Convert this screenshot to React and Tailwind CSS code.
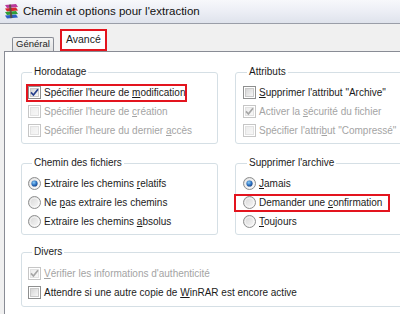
import React from 'react';

const ink = 'text-[#1b1b1b]';
const dim = 'text-[#a4a4a4]';

function WinRarIcon() {
  return (
    <svg width="17" height="17" viewBox="0 0 17 17" className="shrink-0">
      <path d="M2 2 L13 1 L15 4 L4 5 Z" fill="#b9399c" />
      <path d="M2 5.5 L13 4.5 L15 7.5 L4 8.5 Z" fill="#d8262f" />
      <path d="M2 9 L13 8 L15 11 L4 12 Z" fill="#2f9e3a" />
      <path d="M2 12.5 L13 11.5 L15 14.5 L4 15.5 Z" fill="#2d5fc4" />
      <path d="M6 1.8 L8 1.6 L9.4 15 L7.4 15.2 Z" fill="#5b4a3a" opacity="0.85" />
    </svg>
  );
}

function Box({ checked, disabled }) {
  const edge = disabled ? '#c6c6c6' : '#8e8f8f';
  const mark = disabled ? '#a6a6a6' : '#263f8c';
  return (
    <svg width="13" height="13" viewBox="0 0 13 13" className="shrink-0">
      <defs>
        <linearGradient id={disabled ? 'bxd' : 'bx'} x1="0" y1="0" x2="1" y2="1">
          <stop offset="0" stopColor={disabled ? '#ececec' : '#d3d3d3'} />
          <stop offset="1" stopColor={disabled ? '#f8f8f8' : '#f9f9f9'} />
        </linearGradient>
      </defs>
      <rect x="0.5" y="0.5" width="12" height="12" fill="#fff" stroke={edge} />
      <rect x="2.5" y="2.5" width="8" height="8" fill={`url(#${disabled ? 'bxd' : 'bx'})`} stroke={disabled ? '#e2e2e2' : '#c9c9c9'} />
      {checked && (
        <path d="M3 6.4 L5.4 9 L10 3.3" fill="none" stroke={mark} strokeWidth="1.7" />
      )}
    </svg>
  );
}

function Radio({ on }) {
  return (
    <svg width="13" height="13" viewBox="0 0 13 13" className="shrink-0">
      <defs>
        <linearGradient id="rd" x1="0" y1="0" x2="1" y2="1">
          <stop offset="0" stopColor="#d4d4d4" />
          <stop offset="1" stopColor="#fbfbfb" />
        </linearGradient>
        <radialGradient id="rdon" cx="0.4" cy="0.35" r="0.7">
          <stop offset="0" stopColor="#8fd0f8" />
          <stop offset="0.6" stopColor="#2a6fc0" />
          <stop offset="1" stopColor="#173f80" />
        </radialGradient>
      </defs>
      <circle cx="6.5" cy="6.5" r="6" fill="url(#rd)" stroke="#8e8f8f" />
      <circle cx="6.5" cy="6.5" r="4.4" fill="none" stroke="#ffffff" strokeOpacity="0.6" />
      {on && <circle cx="6.5" cy="6.5" r="3.1" fill="url(#rdon)" />}
    </svg>
  );
}

function Row({ children, control, disabled, boxed, wide }) {
  return (
    <div className="h-[19px] flex items-center">
      <span
        className={`flex items-center gap-[3px] h-[14px] ${
          boxed ? 'outline-2 outline-[#e3141e]' : ''
        } ${wide ? '-ml-[7px] pl-[7px] pr-[6px]' : ''} ${disabled ? dim : ink}`}
      >
        {control}
        <span className="whitespace-nowrap">{children}</span>
      </span>
    </div>
  );
}

function Group({ title, children, left = 6, pt = 'pt-[5px]', pb = 'pb-[3px]' }) {
  return (
    <fieldset
      className={`min-w-0 border border-[#d5dfe5] rounded-[3px] ${pt} ${pb}`}
      style={{ paddingLeft: left }}
    >
      <legend className={`ml-[4px] px-[2px] leading-[12px] ${ink}`}>{title}</legend>
      {children}
    </fieldset>
  );
}

export default function App() {
  return (
    <div className="w-[400px] h-[314px] overflow-hidden bg-[#f0f0f0] text-[10px] font-['Liberation_Sans',Arial,sans-serif]">
      {/* title bar */}
      <div className="h-[24px] flex items-center gap-[3px] pl-[3px] bg-gradient-to-b from-[#f7f8fb] via-[#eceef5] to-[#dfe3ec] border-b border-[#9a9ea8]">
        <WinRarIcon />
        <span className="text-[11.5px] text-[#111] whitespace-nowrap">Chemin et options pour l'extraction</span>
      </div>

      {/* tabs */}
      <div className="h-[27px] flex items-end pl-[12px] gap-[6px]">
        <div className="h-[14px] px-[3px] flex items-center border border-b-0 border-[#898c95] rounded-t-[2px] bg-gradient-to-b from-[#f4f4f4] to-[#e1e1e1] text-[#1b1b1b] text-[9.5px] whitespace-nowrap">
          Général
        </div>
        <div className="w-[47px] h-[22px] flex items-center justify-center border-2 border-[#e3141e] bg-white text-[#1b1b1b] text-[10.5px]">
          Avancé
        </div>
      </div>

      {/* panel */}
      <div className="ml-[4px] h-full bg-white border-t border-l border-[#898c95] pt-[14px] pl-[16px]">
        <div className="grid grid-cols-[197px_200px] gap-x-[17px] gap-y-[13px]">
          <Group title="Horodatage">
            <Row control={<Box checked />} boxed>
              Spécifier l'heure de <u>m</u>odification
            </Row>
            <Row control={<Box disabled />} disabled>
              Spécifier l'heure de <u>c</u>réation
            </Row>
            <Row control={<Box disabled />} disabled>
              Spécifier l'heure du dernier <u>a</u>ccès
            </Row>
          </Group>

          <Group title="Attributs" left={7}>
            <Row control={<Box />}>
              <u>S</u>upprimer l'attribut "Archive"
            </Row>
            <Row control={<Box checked disabled />} disabled>
              Activer la <u>s</u>écurité du fichier
            </Row>
            <Row control={<Box disabled />} disabled>
              Spécifier l'attri<u>b</u>ut "Compressé"
            </Row>
          </Group>

          <Group title="Chemin des fichiers">
            <Row control={<Radio on />}>
              Extraire les chemins <u>r</u>elatifs
            </Row>
            <Row control={<Radio />}>
              Ne <u>p</u>as extraire les chemins
            </Row>
            <Row control={<Radio />}>
              Extraire les chemins <u>a</u>bsolus
            </Row>
          </Group>

          <Group title="Supprimer l'archive" left={7}>
            <Row control={<Radio on />}>
              <u>J</u>amais
            </Row>
            <Row control={<Radio />} boxed wide>
              Demander une <u>c</u>onfirmation
            </Row>
            <Row control={<Radio />}>
              <u>T</u>oujours
            </Row>
          </Group>
        </div>

        <div className="w-[420px] mt-[11px]">
          <Group title="Divers" pt="pt-[6px]" pb="pb-[4px]">
            <Row control={<Box checked disabled />} disabled>
              <u>V</u>érifier les informations d'authenticité
            </Row>
            <Row control={<Box />}>
              Attendre si une autre copie de <u>W</u>inRAR est encore active
            </Row>
          </Group>
        </div>
      </div>
    </div>
  );
}
